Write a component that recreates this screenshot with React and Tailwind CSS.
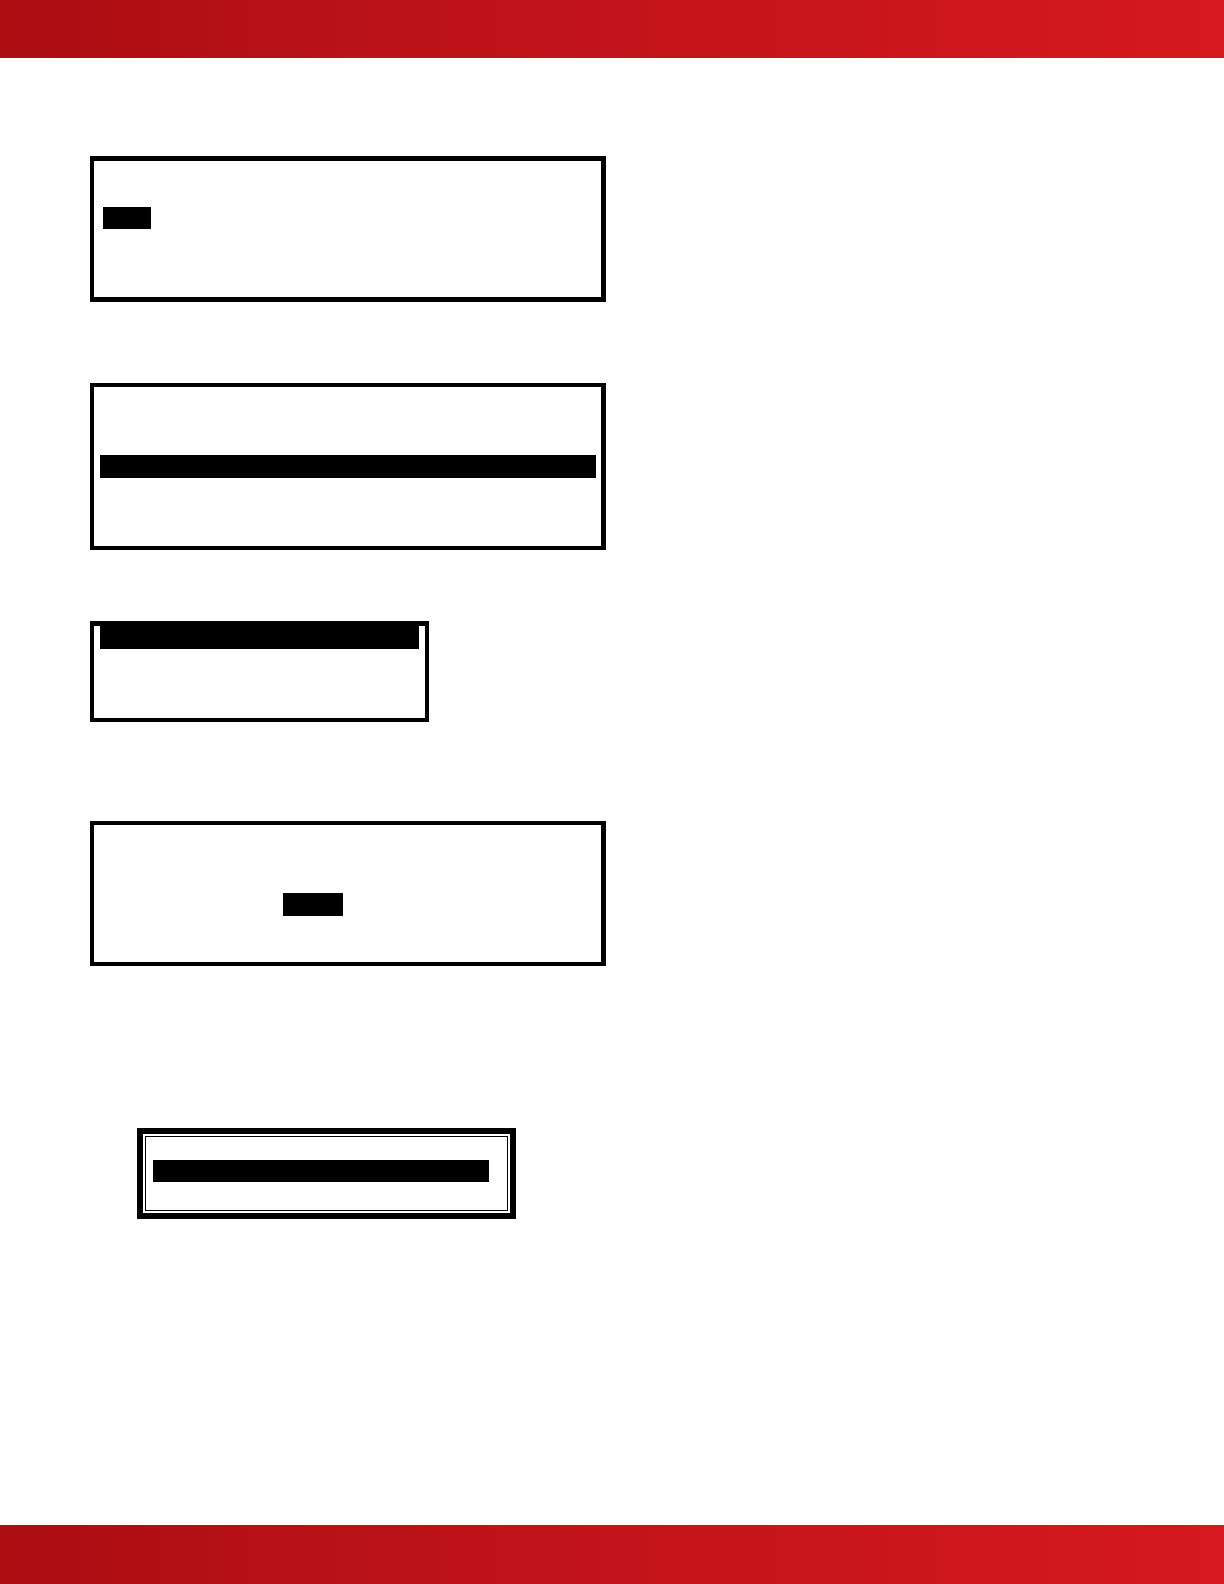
const Band = ({ as: Tag, size }) => (
  <Tag className={`${size} w-full shrink-0 bg-linear-to-r from-[#ac0e12] via-[#c2141a] to-[#d5191e]`} />
);

const Panel = ({ className, bar }) => (
  <section className={`w-full border-black ${className}`}>
    <div className={`bg-black ${bar}`} />
  </section>
);

export default function App() {
  return (
    <div className="flex min-h-screen flex-col bg-white">
      <Band as="header" size="h-[58px]" />
      <main className="flex flex-1 flex-col px-[90px] pt-[98px] pb-16">
        <Panel
          className="max-w-[516px] border-5 border-l-4 pt-[46px] pb-[68px] pl-[9px]"
          bar="h-[22px] w-12"
        />
        <Panel
          className="mt-[81px] max-w-[516px] border-4 border-r-5 pt-[68px] pr-[5px] pb-[68px] pl-[6px]"
          bar="h-[23px]"
        />
        <Panel
          className="mt-[71px] max-w-[339px] border-4 border-t-5 px-[6px] pb-[69px]"
          bar="h-[23px]"
        />
        <Panel
          className="mt-[99px] max-w-[516px] border-4 border-r-5 pt-[68px] pb-[46px] pl-[189px]"
          bar="h-[23px] w-[60px]"
        />
        <section className="mt-[162px] ml-[47px] w-full max-w-[379px] border-6 border-black p-[2px]">
          <div className="border border-black pt-[23px] pr-[18px] pb-7 pl-[7px]">
            <div className="h-[22px] bg-black" />
          </div>
        </section>
      </main>
      <Band as="footer" size="h-[59px]" />
    </div>
  );
}
